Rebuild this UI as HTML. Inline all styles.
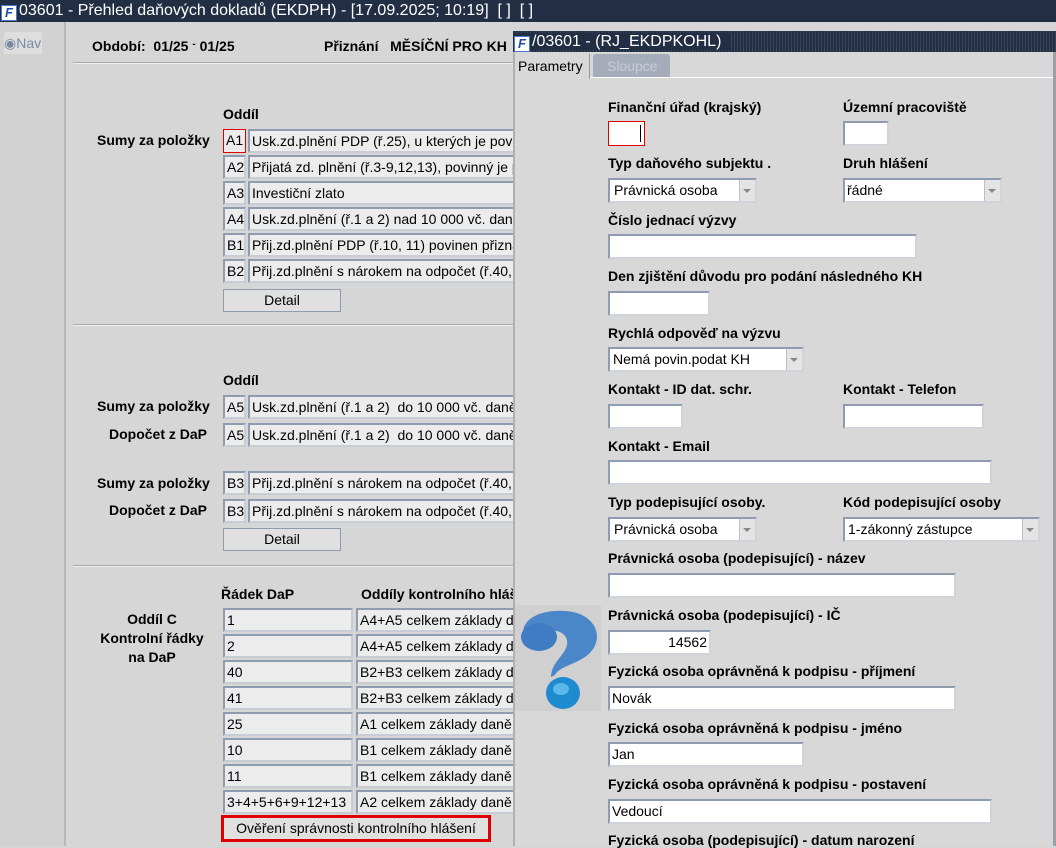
<!DOCTYPE html>
<html><head><meta charset="utf-8"><style>
*{margin:0;padding:0;box-sizing:border-box}
body{width:1056px;height:846px;overflow:hidden;background:#d6d6d6;font-family:"Liberation Sans",Arial,sans-serif;font-size:14px;color:#000;position:relative}
.a{position:absolute}
.tb{background:#222e44;color:#fff;font-size:16px;white-space:nowrap;overflow:hidden}
.b{font-weight:bold}
.f{position:absolute;height:24px;background:#ececec;border:2px solid;border-color:#8f9cb0 #c8ccd4 #c8ccd4 #8f9cb0;padding:1px 2px;white-space:nowrap;overflow:hidden;line-height:18px}
.i{position:absolute;height:25px;background:#fff;border:2px solid;border-color:#8f9cb0 #d0d4da #d0d4da #8f9cb0;padding:1px 4px;line-height:19px;white-space:nowrap}
.s::after{content:"";position:absolute;right:0;top:0;width:15px;height:100%;background:#e4e4e4;border-left:1px solid #c0c0c0}
.s::before{content:"";position:absolute;right:4px;top:9px;border:4px solid transparent;border-top:4px solid #888;z-index:2}
.btn{position:absolute;height:23px;background:#e0e0e0;border:1px solid #8f9cb0;text-align:center;line-height:21px}
.lbl{position:absolute;font-weight:bold;white-space:nowrap}
.hr{position:absolute;height:2px;background:#a8a8a8;border-bottom:1px solid #f0f0f0}
.icon{display:inline-block;width:16px;height:16px;background:#fff;border:1px solid #4a78c8;color:#1b4fb0;font-size:13px;font-weight:bold;font-style:italic;line-height:14px;text-align:center;vertical-align:-2px;margin:0 2px 0 1px}
</style></head><body>
<div class="a tb" style="left:0;top:0;width:1056px;height:22px;line-height:22px"><span class="icon">F</span>03601 - Přehled daňových dokladů (EKDPH) - [17.09.2025; 10:19]&nbsp; [ ]&nbsp; [ ]</div>
<div class="a" style="left:0;top:22px;width:66px;height:824px;background:#d2d2d2;border-right:2px solid #b8b8b8"></div>
<div class="a" style="left:4px;top:32px;width:38px;height:22px;background:#dedede;color:#7a8aa0;font-size:14px;line-height:22px">&#9673;Nav</div>

<div class="lbl" style="left:92px;top:38px">Období: &nbsp;01/25 <span style="font-size:10px;vertical-align:4px">-</span> 01/25</div>
<div class="lbl" style="left:324px;top:38px">Přiznání &nbsp; MĚSÍČNÍ PRO KH</div>
<div class="hr" style="left:73px;top:62px;width:440px"></div>

<div class="lbl" style="left:223px;top:106px">Oddíl</div>
<div class="lbl" style="left:97px;top:132px">Sumy za položky</div>
<div class="f" style="left:223px;top:129px;width:23px;border:1px solid #e00000">A1</div>
<div class="f" style="left:248px;top:129px;width:270px">Usk.zd.plnění PDP (ř.25), u kterých je povinen</div>
<div class="f" style="left:223px;top:155px;width:23px">A2</div>
<div class="f" style="left:248px;top:155px;width:270px">Přijatá zd. plnění (ř.3-9,12,13), povinný je plátce</div>
<div class="f" style="left:223px;top:181px;width:23px">A3</div>
<div class="f" style="left:248px;top:181px;width:270px">Investiční zlato</div>
<div class="f" style="left:223px;top:207px;width:23px">A4</div>
<div class="f" style="left:248px;top:207px;width:270px">Usk.zd.plnění (ř.1 a 2) nad 10 000 vč. daně</div>
<div class="f" style="left:223px;top:233px;width:23px">B1</div>
<div class="f" style="left:248px;top:233px;width:270px">Přij.zd.plnění PDP (ř.10, 11) povinen přiznat</div>
<div class="f" style="left:223px;top:259px;width:23px">B2</div>
<div class="f" style="left:248px;top:259px;width:270px">Přij.zd.plnění s nárokem na odpočet (ř.40, 41)</div>
<div class="btn" style="left:223px;top:289px;width:118px">Detail</div>
<div class="hr" style="left:73px;top:324px;width:440px"></div>

<div class="lbl" style="left:223px;top:372px">Oddíl</div>
<div class="lbl" style="left:97px;top:398px">Sumy za položky</div>
<div class="lbl" style="left:109px;top:426px">Dopočet z DaP</div>
<div class="f" style="left:223px;top:395px;width:23px">A5</div>
<div class="f" style="left:248px;top:395px;width:270px">Usk.zd.plnění (ř.1 a 2)&nbsp; do 10 000 vč. daně</div>
<div class="f" style="left:223px;top:423px;width:23px">A5</div>
<div class="f" style="left:248px;top:423px;width:270px">Usk.zd.plnění (ř.1 a 2)&nbsp; do 10 000 vč. daně</div>
<div class="lbl" style="left:97px;top:475px">Sumy za položky</div>
<div class="lbl" style="left:109px;top:502px">Dopočet z DaP</div>
<div class="f" style="left:223px;top:471px;width:23px">B3</div>
<div class="f" style="left:248px;top:471px;width:270px">Přij.zd.plnění s nárokem na odpočet (ř.40, 41)</div>
<div class="f" style="left:223px;top:499px;width:23px">B3</div>
<div class="f" style="left:248px;top:499px;width:270px">Přij.zd.plnění s nárokem na odpočet (ř.40, 41)</div>
<div class="btn" style="left:223px;top:528px;width:118px">Detail</div>
<div class="hr" style="left:73px;top:565px;width:440px"></div>

<div class="lbl" style="left:221px;top:586px">Řádek DaP</div>
<div class="lbl" style="left:361px;top:586px">Oddíly kontrolního hlášení</div>
<div class="lbl" style="left:100px;top:610px;width:104px;text-align:center;line-height:19px">Oddíl C<br>Kontrolní řádky<br>na DaP</div>
<div class="f" style="left:223px;top:608px;width:130px">1</div><div class="f" style="left:356px;top:608px;width:162px">A4+A5 celkem základy daně</div>
<div class="f" style="left:223px;top:634px;width:130px">2</div><div class="f" style="left:356px;top:634px;width:162px">A4+A5 celkem základy daně</div>
<div class="f" style="left:223px;top:660px;width:130px">40</div><div class="f" style="left:356px;top:660px;width:162px">B2+B3 celkem základy daně</div>
<div class="f" style="left:223px;top:686px;width:130px">41</div><div class="f" style="left:356px;top:686px;width:162px">B2+B3 celkem základy daně</div>
<div class="f" style="left:223px;top:712px;width:130px">25</div><div class="f" style="left:356px;top:712px;width:162px">A1 celkem základy daně</div>
<div class="f" style="left:223px;top:738px;width:130px">10</div><div class="f" style="left:356px;top:738px;width:162px">B1 celkem základy daně</div>
<div class="f" style="left:223px;top:764px;width:130px">11</div><div class="f" style="left:356px;top:764px;width:162px">B1 celkem základy daně</div>
<div class="f" style="left:223px;top:790px;width:130px">3+4+5+6+9+12+13</div><div class="f" style="left:356px;top:790px;width:162px">A2 celkem základy daně</div>
<div class="btn" style="left:221px;top:815px;width:270px;height:27px;border:3px solid #e00000;line-height:21px">Ověření správnosti kontrolního hlášení</div>

<!-- dialog -->
<div class="a" style="left:513px;top:31px;width:543px;height:815px;background:#d8d8d8;border-left:2px solid #b0b0b0;border-right:3px solid #9aa0a8"></div>
<div class="a tb" style="left:513px;top:31px;width:543px;height:21px;line-height:21px;background:#222e44 repeating-linear-gradient(90deg,transparent 0 2px,#3a4658 2px 3px)"><span style="background:#222e44;padding-right:8px"><span class="icon">F</span>/03601 - (RJ_EKDPKOHL)</span></div>
<div class="a" style="left:515px;top:52px;width:538px;height:26px;border-bottom:1px solid #fff"></div>
<div class="a" style="left:515px;top:54px;width:75px;height:25px;background:#d8d8d8;border-right:1px solid #999;line-height:24px;padding-left:3px">Parametry</div>
<div class="a" style="left:593px;top:54px;width:77px;height:23px;background:#a6adba;color:#c8ccd4;line-height:24px;padding-left:14px;border-radius:3px 3px 0 0">Sloupce</div>

<div class="lbl" style="left:608px;top:99px">Finanční úřad (krajský)</div>
<div class="lbl" style="left:843px;top:99px">Územní pracoviště</div>
<div class="i" style="left:608px;top:121px;width:37px;border:1px solid #e00000"><span style="position:absolute;right:3px;top:3px;width:1px;height:17px;background:#000"></span></div>
<div class="i" style="left:843px;top:121px;width:46px"></div>
<div class="lbl" style="left:608px;top:155px">Typ daňového subjektu .</div>
<div class="lbl" style="left:843px;top:155px">Druh hlášení</div>
<div class="i s" style="left:608px;top:178px;width:149px">Právnická osoba</div>
<div class="i s" style="left:843px;top:178px;width:159px;padding-left:2px">řádné</div>
<div class="lbl" style="left:608px;top:212px">Číslo jednací výzvy</div>
<div class="i" style="left:608px;top:234px;width:309px"></div>
<div class="lbl" style="left:608px;top:268px">Den zjištění důvodu pro podání následného KH</div>
<div class="i" style="left:608px;top:291px;width:102px"></div>
<div class="lbl" style="left:608px;top:325px">Rychlá odpověď na výzvu</div>
<div class="i s" style="left:608px;top:347px;width:196px;padding-left:3px">Nemá povin.podat KH</div>
<div class="lbl" style="left:608px;top:381px">Kontakt - ID dat. schr.</div>
<div class="lbl" style="left:843px;top:381px">Kontakt - Telefon</div>
<div class="i" style="left:608px;top:404px;width:75px"></div>
<div class="i" style="left:843px;top:404px;width:141px"></div>
<div class="lbl" style="left:608px;top:438px">Kontakt - Email</div>
<div class="i" style="left:608px;top:460px;width:384px"></div>
<div class="lbl" style="left:608px;top:494px">Typ podepisující osoby.</div>
<div class="lbl" style="left:843px;top:494px">Kód podepisující osoby</div>
<div class="i s" style="left:608px;top:517px;width:149px">Právnická osoba</div>
<div class="i s" style="left:843px;top:517px;width:197px;padding-left:3px">1-zákonný zástupce</div>
<div class="lbl" style="left:608px;top:550px">Právnická osoba (podepisující) - název</div>
<div class="i" style="left:608px;top:573px;width:348px"></div>
<div class="lbl" style="left:608px;top:607px">Právnická osoba (podepisující) - IČ</div>
<div class="i" style="left:608px;top:630px;width:103px;text-align:right;padding-right:2px">14562</div>
<div class="lbl" style="left:608px;top:663px">Fyzická osoba oprávněná k podpisu - příjmení</div>
<div class="i" style="left:608px;top:686px;width:348px;padding-left:2px">Novák</div>
<div class="lbl" style="left:608px;top:720px">Fyzická osoba oprávněná k podpisu - jméno</div>
<div class="i" style="left:608px;top:742px;width:196px;padding-left:2px">Jan</div>
<div class="lbl" style="left:608px;top:776px">Fyzická osoba oprávněná k podpisu - postavení</div>
<div class="i" style="left:608px;top:799px;width:384px;padding-left:2px">Vedoucí</div>
<div class="lbl" style="left:608px;top:832px">Fyzická osoba (podepisující) - datum narození</div>

<svg class="a" style="left:515px;top:605px" width="86" height="106" viewBox="0 0 86 106">
<rect width="86" height="106" fill="#d0d0d0"/>
<path d="M8 28 C8 8 40 2 62 8 C86 16 88 40 70 52 C58 60 44 62 40 70 L36 72 C36 58 50 50 52 40 C54 30 44 24 34 26 C28 20 14 18 8 28 Z" fill="#4a86c8"/>
<ellipse cx="24" cy="32" rx="18" ry="14" fill="#3f7cc4"/>
<ellipse cx="48" cy="88" rx="17" ry="16" fill="#1e8ad0"/>
<ellipse cx="46" cy="84" rx="8" ry="6" fill="#5cb8ea"/>
</svg>
</body></html>
